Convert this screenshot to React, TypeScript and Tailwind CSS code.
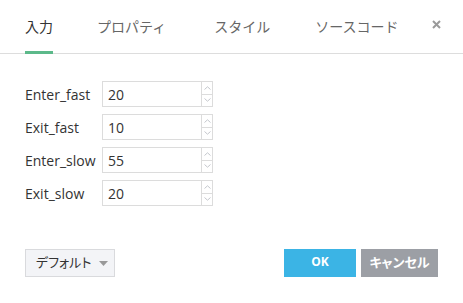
import React from "react";

const font = { fontFamily: '"Open Sans", "Noto Sans CJK JP", sans-serif' };

function Spin() {
  return (
    <div className="flex flex-col w-[11px] border-l border-[#dcdcdc]">
      <div className="flex-1 flex items-center justify-center border-b border-[#dcdcdc]">
        <svg width="7" height="4" viewBox="0 0 7 4">
          <path d="M0.5 3.5 L3.5 0.8 L6.5 3.5" fill="none" stroke="#c4c7cc" strokeWidth="1" />
        </svg>
      </div>
      <div className="flex-1 flex items-center justify-center">
        <svg width="7" height="4" viewBox="0 0 7 4">
          <path d="M0.5 0.5 L3.5 3.2 L6.5 0.5" fill="none" stroke="#c4c7cc" strokeWidth="1" />
        </svg>
      </div>
    </div>
  );
}

function Row({ label, value }: { label: string; value: string }) {
  return (
    <div className="flex items-center h-[26px]">
      <div className="w-[77px] text-[14px] text-[#333]">{label}</div>
      <div className="flex h-[26px] w-[111px] border border-[#dcdcdc]">
        <div className="flex-1 flex items-center pl-[5px] text-[14px] text-[#333]">{value}</div>
        <Spin />
      </div>
    </div>
  );
}

export default function App() {
  return (
    <div className="w-[463px] h-[303px] bg-white relative" style={font}>
      <div className="flex h-[54px] border-b border-[#dddddd] pl-[25px] pr-[22px] text-[14px]">
        <div className="relative flex items-center h-full text-[#333]">
          入力
          <div className="absolute left-0 right-0 bottom-[-1px] h-[3px] bg-[#5cb98a]" />
        </div>
        <div className="flex items-center h-full ml-[44px] text-[#666]">プロパティ</div>
        <div className="flex items-center h-full ml-[48px] text-[#666]">スタイル</div>
        <div className="flex items-center h-full ml-[45px] text-[#666]">ソースコード</div>
        <div className="flex-1" />
        <div className="flex items-center h-full pb-[4px]">
          <svg width="9" height="9" viewBox="0 0 9 9">
            <path d="M1 1 L8 8 M8 1 L1 8" stroke="#9a9a9a" strokeWidth="2" />
          </svg>
        </div>
      </div>
      <div className="flex flex-col gap-[7px] pl-[25px] pt-[27px]">
        <Row label="Enter_fast" value="20" />
        <Row label="Exit_fast" value="10" />
        <Row label="Enter_slow" value="55" />
        <Row label="Exit_slow" value="20" />
      </div>
      <div className="flex items-center pl-[25px] pr-[25px] mt-[43px]">
        <div className="flex shrink-0 whitespace-nowrap items-center h-[28px] w-[90px] bg-[#f3f4f7] border border-[#d9dadd] pl-[10px] text-[13px] text-[#333] [font-feature-settings:'palt']">
          デフォルト
          <svg className="ml-[8px]" width="9" height="5" viewBox="0 0 9 5">
            <path d="M0 0 L9 0 L4.5 5 Z" fill="#999" />
          </svg>
        </div>
        <div className="flex-1" />
        <div className="flex shrink-0 items-center justify-center h-[28px] w-[72px] bg-[#3bb4e5] text-white text-[12px] font-bold pb-[3px]">OK</div>
        <div className="flex shrink-0 whitespace-nowrap items-center justify-center h-[28px] w-[77px] ml-[5px] bg-[#9c9fa5] text-white text-[13px] font-bold [font-feature-settings:'palt']">キャンセル</div>
      </div>
    </div>
  );
}
